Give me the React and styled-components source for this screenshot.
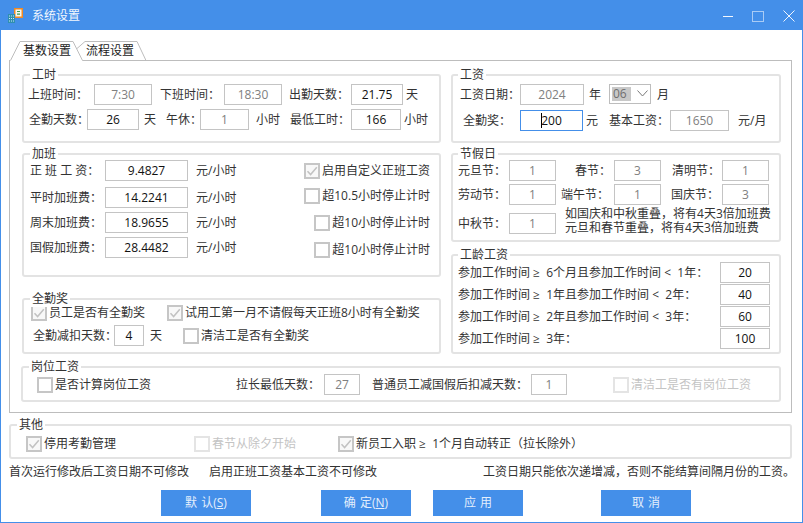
import React from "react";
import styled, { createGlobalStyle } from "styled-components";

const Global = createGlobalStyle`
  html, body { margin: 0; padding: 0; background: #fff; }
  * { box-sizing: border-box; }
  body { font: 12px/16px "Open Sans", "Noto Sans CJK SC", sans-serif; color: #333; }
`;

const Window = styled.div`
  width: 803px; height: 523px; border: 1px solid #448fe9; background: #fff;
  display: flex; flex-direction: column; overflow: hidden;
`;
const TitleBar = styled.header`
  height: 29px; flex: none; background: #448fe9; color: #f2f7fe; display: flex; align-items: center; padding: 0 7px 0 6px;
`;
const TitleText = styled.span`margin-left: 9px; margin-top: 1px;`;
const Controls = styled.div`margin-left: auto; display: flex; align-items: center; gap: 19px; margin-top: 1px;`;

const TabStrip = styled.nav`display: flex; height: 20px; margin: 11px 0 0 9px; position: relative; z-index: 1; flex: none;`;
const Tab = styled.div`
  position: relative; height: 20px; width: ${p => p.$w}px; margin-left: ${p => p.$ml || 0}px; z-index: ${p => p.$z};
  padding: 2px 0 0 ${p => p.$pl}px; color: #222;
  & > span { position: relative; }
`;
const TabShape = styled.svg`position: absolute; left: 0; top: 0;`;

const Panel = styled.section`
  height: 353px; margin: -1px 0 0 8px; width: 783px; flex: none; border: 1px solid #bdbdbd; padding: 13px 10px 0 12px;
`;
const Columns = styled.div`display: grid; grid-template-columns: 419px 330px; column-gap: 10px;`;
const Column = styled.div`display: flex; flex-direction: column;`;

const Group = styled.fieldset`
  position: relative; margin: ${p => p.$mt || 0}px 0 0 ${p => p.$ml || 0}px; height: ${p => p.$h}px; width: ${p => p.$w ? `${p.$w}px` : "auto"};
  border: 2px solid #e3e3e3; border-radius: 3px; padding: ${p => p.$pt}px 4px 0; min-width: 0; flex: none;
`;
const Legend = styled.div`
  position: absolute; top: -9px; left: ${p => p.$left ?? 6}px; background: #fff; padding: 0 2px; line-height: 16px; color: #333;
`;
const Row = styled.div`
  display: flex; align-items: center; height: ${p => p.$h || 21}px; margin-top: ${p => p.$mt || 0}px; white-space: nowrap;
`;
const Text = styled.span`
  flex: none; width: ${p => p.$w ? `${p.$w}px` : "auto"}; margin-left: ${p => p.$ml || 0}px;
  color: ${p => p.$color || "#333"};
`;
const Input = styled.input`
  flex: none; width: ${p => p.$w}px; height: 21px; margin: 0; margin-left: ${p => p.$ml || 0}px; padding: 0;
  border: 1px solid #c4c4c4; border-radius: 0; outline: none; background: #fff; text-align: center;
  font: inherit; color: ${p => p.$muted ? "#808080" : "#111"};
`;
const FocusedInput = styled.div`
  flex: none; width: ${p => p.$w}px; height: 21px; border: 1px solid #448fe9; display: flex; align-items: center; justify-content: center; color: #111;
`;
const Caret = styled.span`display: inline-block; width: 1px; height: 15px; background: #000; margin-right: -1px;`;
const Select = styled.div`
  flex: none; width: ${p => p.$w}px; height: 20px; margin-top: -2px; border: 1px solid #bdbdbd; padding: 2px; display: flex; align-items: center;
`;
const SelectValue = styled.span`width: 19px; height: 14px; background: #c8c8c8; color: #6f6f6f; line-height: 14px; padding-left: 1px;`;
const Chevron = styled.svg`margin-left: 6px;`;

const CheckItem = styled.div`
  flex: none; display: flex; align-items: center; gap: 2px; width: ${p => p.$w ? `${p.$w}px` : "auto"};
  margin-left: ${p => p.$ml || 0}px; margin-top: ${p => p.$mt || 0}px; margin-right: ${p => p.$mr || 0}px;
  color: ${p => p.$dim ? "#c4c4c4" : "#333"};
  ${p => p.$end ? "margin-left: auto;" : ""}
`;
const Box = styled.span`
  width: 16px; height: 16px; flex: none; border: 2px solid ${p => p.$dim ? "#e4e4e4" : "#c6c6c6"}; background: ${p => p.$checked ? "#f8f8f8" : "#fff"};
  display: flex; align-items: center; justify-content: center;
`;
const Note = styled.div`margin-left: ${p => p.$ml}px; margin-top: -5px; line-height: 14px; color: #333; flex: none;`;
const NoteRow = styled.div`display: flex; height: 16px; margin-top: 5px; white-space: nowrap; padding-left: 8px; flex: none;`;
const ButtonRow = styled.div`display: flex; margin-top: 10px; padding-left: 160px; flex: none;`;
const Button = styled.button`
  width: 90px; height: 26px; margin: 0 0 0 ${p => p.$ml || 0}px; padding: 0; border: 0; border-radius: 0; background: #448fe9; color: #e3eefc; font: inherit; word-spacing: 1px;
  & u { text-underline-offset: 1px; }
`;

const Check = ({ checked, dim, label, ...rest }) => (
  <CheckItem $dim={dim} {...rest}>
    <Box $checked={checked} $dim={dim}>
      {checked && (
        <svg width="12" height="12" viewBox="0 0 12 12" fill="none">
          <path d="M1.5 6.2 4.6 9.6 10.8 2.2" stroke={dim ? "#e0e0e0" : "#c2c2c2"} strokeWidth="1.5" />
        </svg>
      )}
    </Box>
    <span>{label}</span>
  </CheckItem>
);

const AppIcon = () => (
  <svg width="16" height="15" viewBox="0 0 16 15">
    <rect x="7" y="0" width="9" height="10" fill="#f08a24" />
    <rect x="8.5" y="1.5" width="6" height="7" fill="#f4f8f2" />
    <path d="M10 3h3v1h-3zM10 5.5h3v1.2h-3z" fill="#3f9a4a" />
    <rect x="1" y="6" width="7" height="9" fill="#2f8fb0" />
    <path d="M2 7.5h1v1H2zM4 7.5h1v1H4zM6 7.5h1v1H6zM2 10h1v1H2zM4 10h1v1H4zM6 10h1v1H6zM2 12.5h1v1H2zM4 12.5h1v1H4zM6 12.5h1v1H6z" fill="#cfeaf3" />
  </svg>
);

const C = "\uFF1A";
const N = "\u00A0";

export default function App() {
  return (
    <>
      <Global />
      <Window>
        <TitleBar>
          <AppIcon />
          <TitleText>系统设置</TitleText>
          <Controls>
            <svg width="10" height="11" viewBox="0 0 10 11"><path d="M0 5.5h10" stroke="#f2f7fe" /></svg>
            <svg width="12" height="11" viewBox="0 0 12 11" fill="none"><rect x=".5" y=".5" width="11" height="10" stroke="#a9cbf5" /><path d="M0 .5h12" stroke="#a9cbf5" /></svg>
            <svg width="12" height="12" viewBox="0 0 12 12" fill="none"><path d="M.5.5l11 11M11.5.5l-11 11" stroke="#eef5fe" /></svg>
          </Controls>
        </TitleBar>

        <TabStrip>
          <Tab $w={73} $z={2} $pl={13}>
            <TabShape width="73" height="20" viewBox="0 0 73 20">
              <path d="M0 20V19.5L10 .5H63L72.5 19.5V20Z" fill="#fff" />
              <path d="M.5 19.5 10 .5H63L72.5 19.5" fill="none" stroke="#bdbdbd" />
            </TabShape>
            <span>基数设置</span>
          </Tab>
          <Tab $w={69} $ml={-6} $z={1} $pl={9}>
            <TabShape width="69" height="20" viewBox="0 0 69 20">
              <path d="M0 7.5 8 .5H60L69 19.5" fill="none" stroke="#bdbdbd" />
            </TabShape>
            <span>流程设置</span>
          </Tab>
        </TabStrip>

        <Panel>
          <Columns>
            <Column>
              <Group $h={69} $pt={8}>
                <Legend>工时</Legend>
                <Row>
                  <Text $w={66}>上班时间{C}</Text>
                  <Input $w={58} $muted readOnly value="7:30" />
                  <Text $ml={8} $w={64}>下班时间{C}</Text>
                  <Input $w={58} $muted readOnly value="18:30" />
                  <Text $ml={7} $w={62}>出勤天数{C}</Text>
                  <Input $w={52} readOnly value="21.75" />
                  <Text $ml={3}>天</Text>
                </Row>
                <Row $mt={4}>
                  <Text $ml={1} $w={58}>全勤天数{C}</Text>
                  <Input $w={52} readOnly value="26" />
                  <Text $ml={5} $w={22}>天</Text>
                  <Text $w={34}>午休{C}</Text>
                  <Input $w={49} $muted readOnly value="1" />
                  <Text $ml={7} $w={34}>小时</Text>
                  <Text $w={61}>最低工时{C}</Text>
                  <Input $w={50} readOnly value="166" />
                  <Text $ml={3}>小时</Text>
                </Row>
              </Group>

              <Group $h={124} $mt={10} $pt={5}>
                <Legend>加班</Legend>
                <Row>
                  <Text $ml={2} $w={75}>正 班 工 资{C}</Text>
                  <Input $w={83} readOnly value="9.4827" />
                  <Text $ml={8}>元/小时</Text>
                  <Check $end $mr={5} checked label="启用自定义正班工资" />
                </Row>
                <Row $mt={6}>
                  <Text $ml={2} $w={75}>平时加班费{C}</Text>
                  <Input $w={83} readOnly value="14.2241" />
                  <Text $ml={8}>元/小时</Text>
                  <Check $end $mr={5} $mt={-3} label="超10.5小时停止计时" />
                </Row>
                <Row $mt={4}>
                  <Text $ml={2} $w={75}>周末加班费{C}</Text>
                  <Input $w={83} readOnly value="18.9655" />
                  <Text $ml={8}>元/小时</Text>
                  <Check $end $mr={5} label="超10小时停止计时" />
                </Row>
                <Row $mt={4}>
                  <Text $ml={2} $w={75}>国假加班费{C}</Text>
                  <Input $w={83} readOnly value="28.4482" />
                  <Text $ml={8}>元/小时</Text>
                  <Check $end $mr={5} $mt={5} label="超10小时停止计时" />
                </Row>
              </Group>

              <Group $h={56} $mt={21} $pt={4}>
                <Legend>全勤奖</Legend>
                <Row $h={18}>
                  <Check $ml={3} $w={136} checked label="员工是否有全勤奖" />
                  <Check checked label="试用工第一月不请假每天正班8小时有全勤奖" />
                </Row>
                <Row $mt={3}>
                  <Text $ml={5} $w={81}>全勤减扣天数{C}</Text>
                  <Input $w={30} readOnly value="4" />
                  <Text $ml={6} $w={33}>天</Text>
                  <Check label="清洁工是否有全勤奖" />
                </Row>
              </Group>
            </Column>

            <Column>
              <Group $h={69} $pt={8}>
                <Legend $left={5}>工资</Legend>
                <Row>
                  <Text $ml={3} $w={60}>工资日期{C}</Text>
                  <Input $w={64} $muted readOnly value="2024" />
                  <Text $ml={5} $w={20}>年</Text>
                  <Select $w={42}>
                    <SelectValue>06</SelectValue>
                    <Chevron width="11" height="7" viewBox="0 0 11 7" fill="none"><path d="M.5.5 5.5 6l5-5.5" stroke="#7a7a7a" /></Chevron>
                  </Select>
                  <Text $ml={6}>月</Text>
                </Row>
                <Row $mt={5}>
                  <Text $ml={6} $w={57}>全勤奖{C}</Text>
                  <FocusedInput $w={63}><Caret />200</FocusedInput>
                  <Text $ml={3} $w={23}>元</Text>
                  <Text $w={61}>基本工资{C}</Text>
                  <Input $w={59} $muted readOnly value="1650" />
                  <Text $ml={9}>元/月</Text>
                </Row>
              </Group>

              <Group $h={89} $mt={10} $pt={5}>
                <Legend $left={5}>节假日</Legend>
                <Row>
                  <Text $ml={1} $w={51}>元旦节{C}</Text>
                  <Input $w={47} $muted readOnly value="1" />
                  <Text $ml={19} $w={39}>春节{C}</Text>
                  <Input $w={47} $muted readOnly value="3" />
                  <Text $ml={11} $w={50}>清明节{C}</Text>
                  <Input $w={47} $muted readOnly value="1" />
                </Row>
                <Row $mt={3}>
                  <Text $ml={1} $w={51}>劳动节{C}</Text>
                  <Input $w={47} $muted readOnly value="1" />
                  <Text $ml={5} $w={53}>端午节{C}</Text>
                  <Input $w={47} $muted readOnly value="1" />
                  <Text $ml={10} $w={51}>国庆节{C}</Text>
                  <Input $w={47} $muted readOnly value="3" />
                </Row>
                <Row $mt={8}>
                  <Text $ml={1} $w={51}>中秋节{C}</Text>
                  <Input $w={47} $muted readOnly value="1" />
                  <Note $ml={9}>
                    如国庆和中秋重叠{"\uFF0C"}将有4天3倍加班费<br />
                    元旦和春节重叠{"\uFF0C"}将有4天3倍加班费
                  </Note>
                </Row>
              </Group>

              <Group $h={100} $mt={12} $pt={6}>
                <Legend $left={5}>工龄工资</Legend>
                <Row>
                  <Text $ml={1} $w={262}>参加工作时间 ≥{N}{N}6个月且参加工作时间 &lt;{N}{N}1年{C}</Text>
                  <Input $w={50} readOnly value="20" />
                </Row>
                <Row $mt={1}>
                  <Text $ml={1} $w={262}>参加工作时间 ≥{N}{N}1年且参加工作时间 &lt;{N}{N}2年{C}</Text>
                  <Input $w={50} readOnly value="40" />
                </Row>
                <Row $mt={1}>
                  <Text $ml={1} $w={262}>参加工作时间 ≥{N}{N}2年且参加工作时间 &lt;{N}{N}3年{C}</Text>
                  <Input $w={50} readOnly value="60" />
                </Row>
                <Row $mt={1}>
                  <Text $ml={1} $w={262}>参加工作时间 ≥{N}{N}3年{C}</Text>
                  <Input $w={50} readOnly value="100" />
                </Row>
              </Group>
            </Column>
          </Columns>

          <Group $h={36} $mt={12} $ml={-1} $pt={6}>
            <Legend>岗位工资</Legend>
            <Row>
              <Check $ml={10} $w={199} label="是否计算岗位工资" />
              <Text $w={88}>拉长最低天数{C}</Text>
              <Input $w={36} $muted readOnly value="27" />
              <Text $ml={12} $w={159}>普通员工减国假后扣减天数{C}</Text>
              <Input $w={36} $muted readOnly value="1" />
              <Check $ml={46} dim label="清洁工是否有岗位工资" />
            </Row>
          </Group>
        </Panel>

        <Group $h={35} $w={783} $mt={11} $ml={8} $pt={7}>
          <Legend>其他</Legend>
          <Row>
            <Check $ml={11} $w={168} checked label="停用考勤管理" />
            <Check $w={144} dim label="春节从除夕开始" />
            <Check checked label={`新员工入职 ≥${N}${N}1个月自动转正\uFF08拉长除外\uFF09`} />
          </Row>
        </Group>

        <NoteRow>
          <Text $w={200}>首次运行修改后工资日期不可修改</Text>
          <Text $w={274}>启用正班工资基本工资不可修改</Text>
          <Text>工资日期只能依次递增减{"\uFF0C"}否则不能结算间隔月份的工资。</Text>
        </NoteRow>

        <ButtonRow>
          <Button>默 认(<u>S</u>)</Button>
          <Button $ml={70}>确 定(<u>N</u>)</Button>
          <Button $ml={22}>应 用</Button>
          <Button $ml={78}>取 消</Button>
        </ButtonRow>
      </Window>
    </>
  );
}
